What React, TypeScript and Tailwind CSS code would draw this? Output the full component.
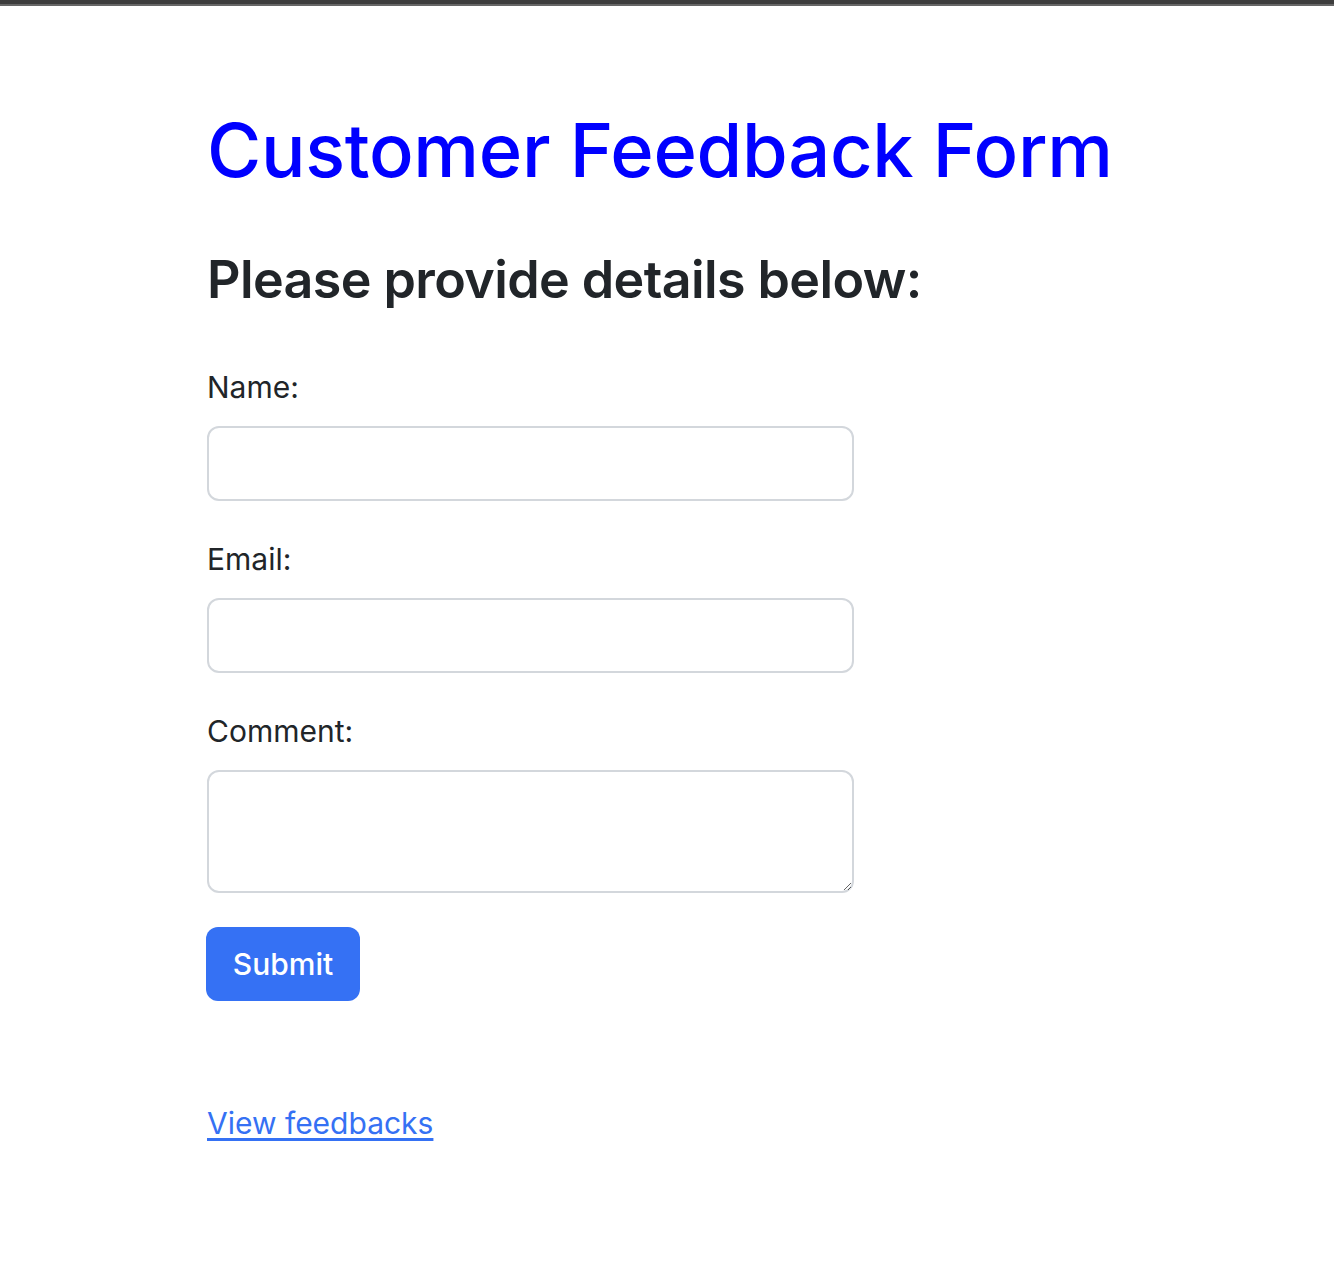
export default function App() {
  return (
    <div className="min-h-screen bg-white font-['Inter',sans-serif] text-[#212529]">
      <div className="h-[4px] bg-[#3d3d3d]" />
      <div className="h-[2px] bg-[#666666]" />

      <div className="pl-[207px] pt-[100px]">
        <h1 className="text-[74px] leading-[88px] font-medium text-[#0000ff] tracking-[-0.3px]">
          Customer Feedback Form
        </h1>
        <h3 className="mt-[55px] text-[52px] leading-[62px] font-semibold tracking-[-0.6px]">
          Please provide details below:
        </h3>

        <form className="mt-[53px] w-[647px]" onSubmit={(e) => e.preventDefault()}>
          <div className="mb-[35px]">
            <label className="block text-[30px] leading-[46px] mb-[16px]">Name:</label>
            <input
              type="text"
              className="block w-full h-[75px] rounded-[12px] border-2 border-[#d3d7dc] px-[24px] text-[30px] outline-none"
            />
          </div>
          <div className="mb-[35px]">
            <label className="block text-[30px] leading-[46px] mb-[16px]">Email:</label>
            <input
              type="email"
              className="block w-full h-[75px] rounded-[12px] border-2 border-[#d3d7dc] px-[24px] text-[30px] outline-none"
            />
          </div>
          <div className="mb-[34px]">
            <label className="block text-[30px] leading-[46px] mb-[16px]">Comment:</label>
            <textarea className="block w-full h-[123px] rounded-[12px] border-2 border-[#d3d7dc] px-[24px] py-[12px] text-[30px] outline-none" />
          </div>
          <button
            type="submit"
            className="h-[74px] w-[154px] -ml-px rounded-[12px] bg-[#3571f4] text-white text-[30px] font-medium"
          >
            Submit
          </button>
        </form>

        <a href="#" className="mt-[99px] inline-block text-[30px] leading-[46px] text-[#3571f4] underline underline-offset-[4px]">
          View feedbacks
        </a>
      </div>
    </div>
  );
}
